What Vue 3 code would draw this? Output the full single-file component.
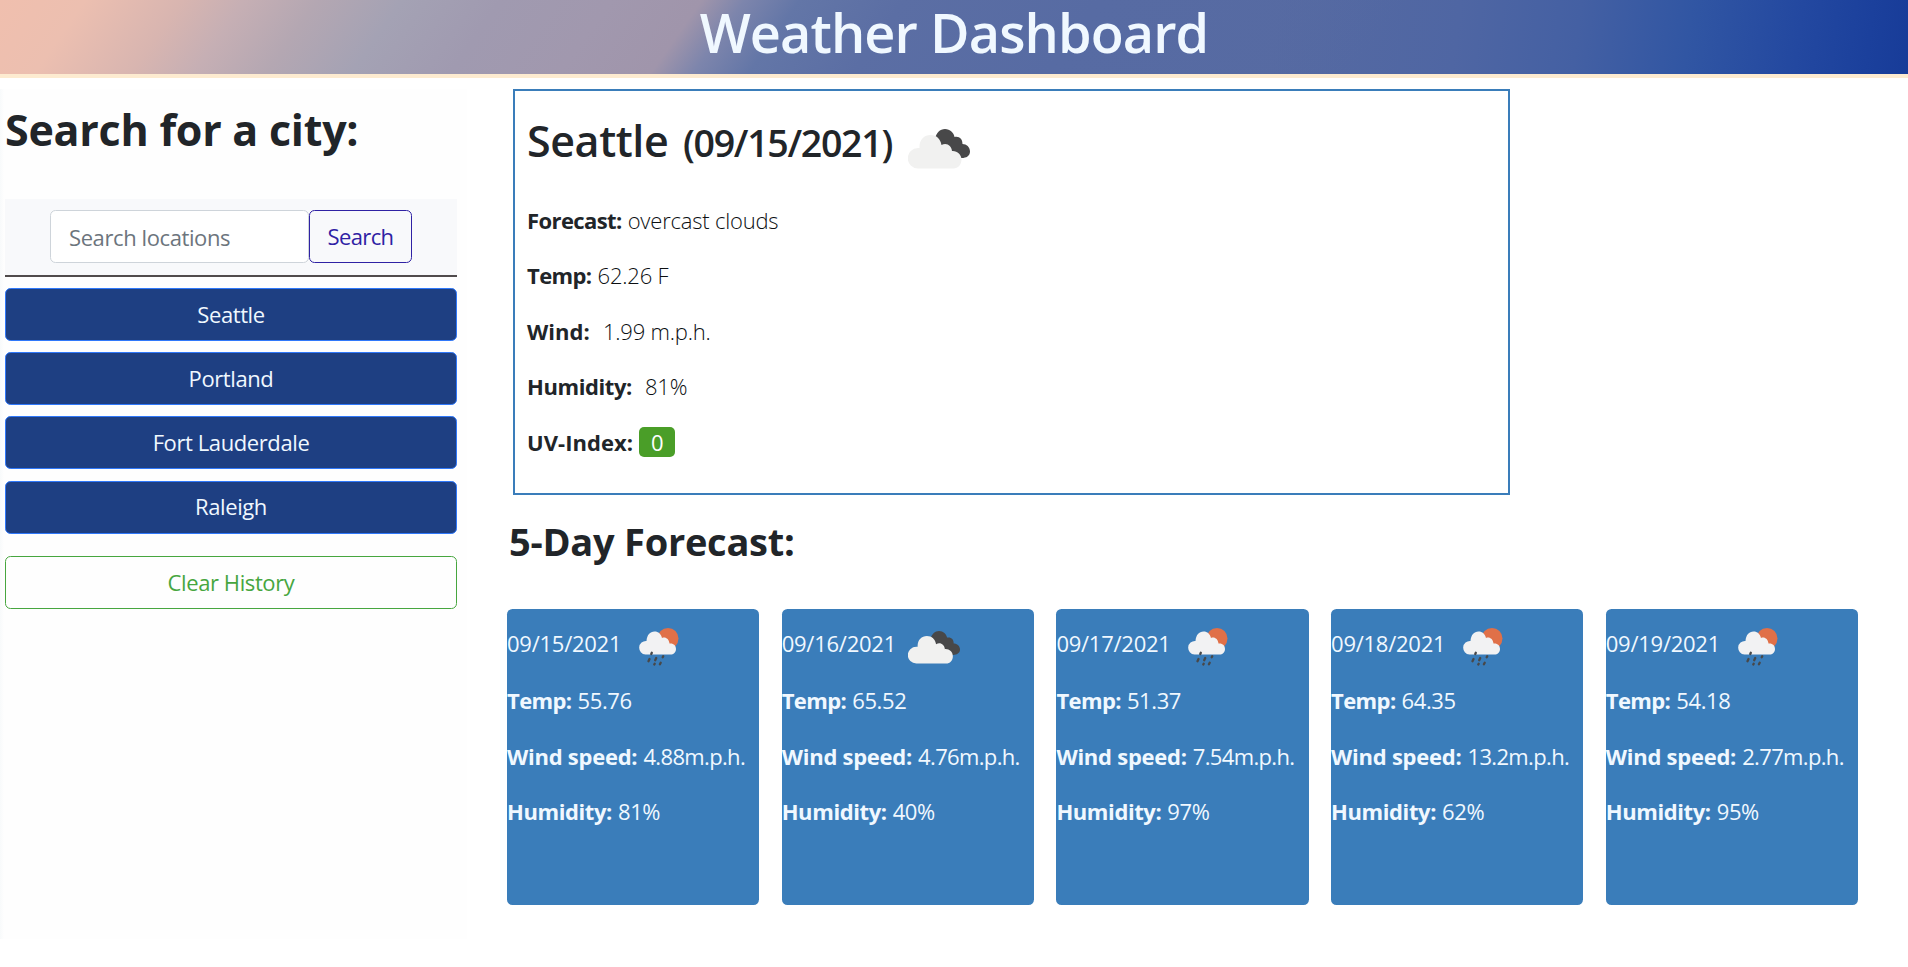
<script setup>
const cities = ['Seattle', 'Portland', 'Fort Lauderdale', 'Raleigh']

const days = [
  { date: '09/15/2021', icon: 'rain', temp: '55.76', wind: '4.88', humidity: '81' },
  { date: '09/16/2021', icon: 'clouds', temp: '65.52', wind: '4.76', humidity: '40' },
  { date: '09/17/2021', icon: 'rain', temp: '51.37', wind: '7.54', humidity: '97' },
  { date: '09/18/2021', icon: 'rain', temp: '64.35', wind: '13.2', humidity: '62' },
  { date: '09/19/2021', icon: 'rain', temp: '54.18', wind: '2.77', humidity: '95' },
]
</script>

<template>
  <header class="banner"><h1>Weather Dashboard</h1></header>
  <main class="layout">
    <aside class="sidebar">
      <h2 class="side-title">Search for a city:</h2>
      <form class="search" @submit.prevent>
        <input type="text" placeholder="Search locations" />
        <button type="submit" class="search-btn">Search</button>
      </form>
      <button v-for="city in cities" :key="city" class="btn city">{{ city }}</button>
      <button class="btn clear">Clear History</button>
    </aside>

    <section class="content">
      <article class="current">
        <div class="heading">
          <h2>Seattle</h2>
          <h3>(09/15/2021)</h3>
          <svg class="now-icon" viewBox="0 0 62 40">
            <path fill="#484849" d="M27 10C28 4 32 0 37 0c5 0 9 4 9.500 8 5-1 8 2 8 7 4 0 7.500 3 7.500 7.500S58 29 54 29H42Z" />
            <path fill="#f1f1f0" d="M10 39.500a10 10 0 0 1 0-20.500h1.500C11 11 16 6 22.500 6c6 0 10 4 11 10 5-3 10 .5 10.500 6 5-.5 9.500 3.500 9.500 8.500 0 5-3.500 9-8 9Z" />
          </svg>
        </div>
        <p><b class="tight">Forecast:</b><span>overcast clouds</span></p>
        <p><b class="tight">Temp:</b><span>62.26 F</span></p>
        <p><b class="loose">Wind:</b><span class="wide">1.99 m.p.h.</span></p>
        <p><b>Humidity:</b><span class="wide">81%</span></p>
        <p><b class="loose">UV-Index:</b><span class="uv">0</span></p>
      </article>

      <h2 class="forecast-title">5-Day Forecast:</h2>
      <div class="cards">
        <article v-for="day in days" :key="day.date" class="card">
          <div class="card-head">
            <span>{{ day.date }}</span>
            <svg v-if="day.icon === 'rain'" class="rain-icon" viewBox="0 0 40 38">
              <circle cx="29" cy="10.500" r="10.500" fill="#e07048" />
              <path fill="#f2f2f3" d="M6.500 26.500a6.800 6.800 0 0 1 1-13.600C8 7 11 3.500 15.500 3.500c4 0 6.500 2.500 7.500 6.500 3.500-1.500 7 1 7.500 5.500 4-.5 6.500 2 6.500 5.500s-2.500 5.500-5.500 5.500Z" />
              <path stroke="#484849" stroke-width="2.300" stroke-linecap="round" d="m12.800 24.800-.5 1.200m-1.800 5-1 2.200m7.700-3.200-1 2.200m8-4-.5 1m-2 5.500-.8 1.500m-5.200-.5-.4.8" />
            </svg>
            <svg v-else class="cloud-icon" viewBox="0 0 62 40" preserveAspectRatio="none">
              <path fill="#484849" d="M27 10C28 4 32 0 37 0c5 0 9 4 9.500 8 5-1 8 2 8 7 4 0 7.500 3 7.500 7.500S58 29 54 29H42Z" />
              <path fill="#f1f1f0" d="M10 39.500a10 10 0 0 1 0-20.500h1.500C11 11 16 6 22.500 6c6 0 10 4 11 10 5-3 10 .5 10.500 6 5-.5 9.500 3.500 9.500 8.500 0 5-3.500 9-8 9Z" />
            </svg>
          </div>
          <p><b class="tight">Temp:</b><span>{{ day.temp }}</span></p>
          <p><b class="wind">Wind speed:</b><span class="speed">{{ day.wind }}m.p.h.</span></p>
          <p><b>Humidity:</b><span>{{ day.humidity }}%</span></p>
        </article>
      </div>
    </section>
  </main>
</template>

<style>
body {
  margin: 0;
  background: #fff;
  color: #212529;
  font-family: "Open Sans", "Noto Sans", sans-serif;
  font-size: 22px;
  line-height: 33.3px;
}
</style>

<style scoped>
h1, h2, h3, p { margin: 0; white-space: nowrap; }
button, input { box-sizing: border-box; font: inherit; letter-spacing: inherit; }
b { font-weight: 700; }
b + span { margin-left: 6px; }
.tight { letter-spacing: -0.6px; }
.loose { letter-spacing: 0.05px; }

.banner {
  height: 74px;
  border-bottom: 4px solid #fdebd0;
  background:
    linear-gradient(125deg, #f0bfae 0, #ecbfb0 70px, #d8b5b0 150px, #c6afb4 200px, #b4a7b2 260px, #a4a2b4 330px, #a09ab0 410px, #a198ae 500px, #a095ab 575px, #7d85ac 610px, #6376a7 655px, #5b6ea4 740px, #576ba3 900px, transparent 1150px),
    linear-gradient(97deg, #576ba3 0, #566aa2 1270px, #4f66a3 1450px, #4460a3 1570px, #3156a3 1680px, #2348a0 1790px, #1b409c 1860px, #173b98 1908px);
}
.banner h1 {
  font-size: 54px;
  font-weight: 600;
  line-height: 64px;
  text-align: center;
  color: #f0f8ff;
  letter-spacing: -0.9px;
}

.layout { display: flex; padding-top: 11px; }

.sidebar {
  box-sizing: border-box;
  width: 467px;
  height: 850px;
  padding: 14px 10px 0 5px;
  background: linear-gradient(90deg, #f8fafb, #fefefe 4px);
  letter-spacing: -0.4px;
}
.side-title { font-size: 43px; font-weight: 700; line-height: 53px; letter-spacing: -0.25px; }
.search {
  box-sizing: border-box;
  display: flex;
  justify-content: center;
  height: 78px;
  margin: 43px 0 11px;
  padding-top: 11px;
  background: #f8f9fb;
  border-bottom: 2px solid #504b4c;
}
.search input {
  width: 259px;
  height: 53px;
  padding: 0 18px;
  border: 1px solid #ced4da;
  border-radius: 5.500px;
  background: #fff;
}
.search input::placeholder { color: #6c757d; opacity: 1; }
.search-btn {
  width: 103px;
  height: 53px;
  padding: 0;
  border: 1px solid #2f22a4;
  border-radius: 5.500px;
  background: transparent;
  color: #2f22a4;
  letter-spacing: -0.6px;
}
.btn {
  display: block;
  width: 100%;
  height: 53px;
  margin-bottom: 11.200px;
  border-radius: 5.500px;
}
.city { background: #1e3f82; border: 1px solid #2f78fa; color: #f0f8ff; }
.clear { margin-top: 22px; padding-top: 3px; background: transparent; border: 1px solid #47a63f; color: #47a63f; }

.content { padding-left: 40px; }
.current {
  box-sizing: border-box;
  width: 997px;
  height: 406px;
  margin-left: 6px;
  padding: 0 12px;
  border: 2px solid #3a7dba;
}
.current p { margin-bottom: 22.100px; letter-spacing: -0.4px; }
.current p span { color: #0c0f12; font-weight: 350; letter-spacing: -0.2px; }
.current p .wide { margin-left: 13px; }
.heading { display: flex; align-items: baseline; height: 97px; margin-bottom: 16px; padding-top: 7px; box-sizing: border-box; }
.heading h2 { width: 156px; font-size: 43px; font-weight: 550; line-height: 85px; letter-spacing: -0.4px; }
.heading h3 { width: 223px; margin-right: 2px; font-size: 37.500px; font-weight: 550; letter-spacing: -1.3px; }
.now-icon { flex: none; width: 62px; height: 40px; position: relative; top: 12px; }
.current p .uv {
  display: inline-block;
  width: 36px;
  height: 30px;
  border-radius: 5px;
  background: #4a9e28;
  color: #fff;
  font-weight: 400;
  line-height: 30px;
  text-align: center;
}
.forecast-title { margin: 20px 0 0 2px; font-size: 38px; font-weight: 700; line-height: 52px; letter-spacing: -0.25px; }

.cards { display: flex; gap: 22.300px; margin-top: 42px; }
.card {
  width: 252.400px;
  height: 296px;
  border-radius: 5.500px;
  background: #3a7dba;
  color: #f0f8ff;
  letter-spacing: -0.4px;
}
.card-head { display: flex; height: 75px; padding-top: 18px; box-sizing: border-box; }
.card-head span { width: 132px; letter-spacing: -0.25px; }
.card p { margin-bottom: 22.400px; }
.wind { letter-spacing: -0.25px; }
.card .speed { letter-spacing: -0.65px; }
.rain-icon { width: 40px; height: 38px; margin-top: 1px; }
.cloud-icon { width: 52px; height: 33px; margin: 4px 0 0 -6px; }
</style>
